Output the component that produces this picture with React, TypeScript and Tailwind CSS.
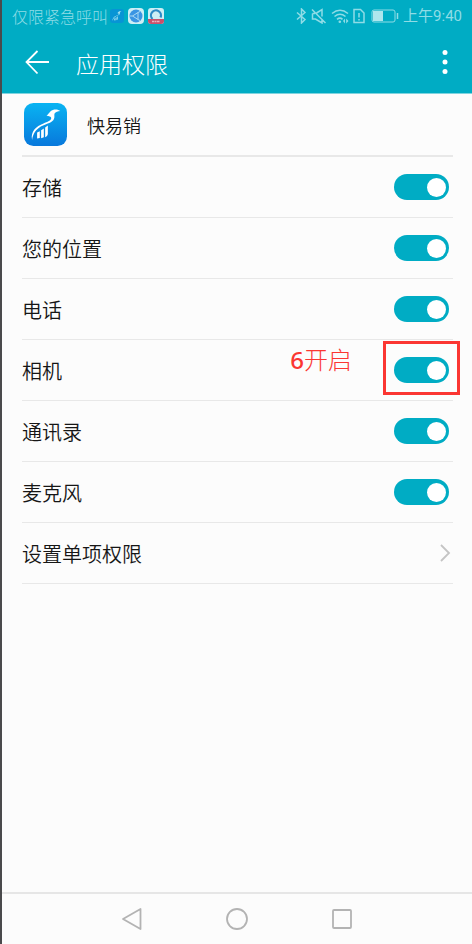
import { useState } from "react";

const permissions = [
    { id: "storage", label: "存储" },
    { id: "location", label: "您的位置" },
    { id: "phone", label: "电话" },
    { id: "camera", label: "相机", step: 6, note: "开启" },
    { id: "contacts", label: "通讯录" },
    { id: "microphone", label: "麦克风" },
];

const BirdMark = () => (
    <>
        <path d="M24 110C19 84 36 70 58 61C70 56 81 53 81 45C81 40 74 39 67 38C73 35 75 25 86 21C94 18 103 20 108 24C101 24 94 27 91 31C89 37 93 43 87 51C79 60 64 62 50 70C36 79 27 90 24 110Z" />
        <path d="M39 88L47 84V104L39 106ZM51 81L59 76V102L51 105ZM63 73L71 67V92C70 97 67 100 63 102Z" />
    </>
);

const AppIcon = ({ className }: { className: string }) => (
    <svg viewBox="0 0 128 128" className={className} aria-hidden="true">
        <defs>
            <linearGradient id="appBlue" x1="0" y1="0" x2="0" y2="1">
                <stop offset="0" stopColor="#09b4f2" />
                <stop offset="1" stopColor="#0878dc" />
            </linearGradient>
        </defs>
        <rect width="128" height="128" rx="28" fill="url(#appBlue)" />
        <g fill="#fff">
            <BirdMark />
        </g>
    </svg>
);

const StatusBar = () => (
    <div className="flex h-8 items-center justify-between px-2.5 text-[#8fdce6]">
        <div className="flex items-center gap-0.5">
            <span className="text-base leading-5 font-light">仅限紧急呼叫</span>
            {/* Notification icons */}
            <div className="flex items-center gap-1">
                <svg viewBox="0 0 14 14" className="size-3.5" aria-hidden="true">
                    <rect width="14" height="14" rx="3" fill="#0794d5" />
                    <g fill="#a5e2f2" transform="scale(.109)">
                        <BirdMark />
                    </g>
                </svg>
                <svg viewBox="0 0 16 16" className="size-4" aria-hidden="true">
                    <rect width="16" height="16" rx="4" fill="#cdeef5" />
                    <circle cx="8" cy="8" r="6.5" fill="#3b95e3" />
                    <path d="M4.5 8L10 4.5V11.5Z M4.5 8H2M10 4.5L12 3.5M10 11.5L12 12.5" fill="none" stroke="#b7e1f5" strokeWidth=".9" />
                </svg>
                <svg viewBox="0 0 16 16" className="size-4" aria-hidden="true">
                    <rect width="16" height="16" rx="3" fill="#cdeef5" />
                    <path d="M4.5 11A5 5 0 1 1 12.5 9.5" fill="none" stroke="#2d8bc6" strokeWidth="2.2" />
                    <path d="M0 11H16V13A3 3 0 0 1 13 16H3A3 3 0 0 1 0 13Z" fill="#c9506b" />
                    <path d="M4 13.5H12" stroke="#e7b3c0" strokeWidth="1.5" strokeDasharray="2 .5" />
                </svg>
            </div>
        </div>
        <div className="flex items-center gap-1">
            {/* Bluetooth */}
            <svg viewBox="0 0 11 16" className="h-4 w-[11px]" fill="none" stroke="currentColor" strokeWidth="1.5" aria-hidden="true">
                <path d="M1 4.5L9 11.5L5.5 15V1L9 4.5L1 11.5" />
            </svg>
            {/* Muted */}
            <svg viewBox="0 0 16 16" className="size-4" fill="none" stroke="currentColor" strokeWidth="1.5" aria-hidden="true">
                <path d="M1.5 5.5V11H4.5L11 15V11M5.5 5L11 1.5V8.5M1.5 5.5H4M1 1.5L14.5 15" />
            </svg>
            {/* Wi-Fi */}
            <svg viewBox="0 0 18 16" className="h-4 w-[18px]" fill="none" stroke="currentColor" strokeWidth="1.6" aria-hidden="true">
                <path d="M1 5.5Q9 -1 17 5.5M3.5 8.5Q9 4 14.5 8.5M6 11.3Q9 9 11.5 11.3" />
                <circle cx="8.8" cy="13.7" r="1.3" fill="currentColor" stroke="none" />
                <path d="M12 13L14 10.5V15.5ZM17.5 13L15.2 10.5V15.5Z" fill="currentColor" stroke="none" />
            </svg>
            {/* SIM warning */}
            <svg viewBox="0 0 12 16" className="h-4 w-3" fill="none" stroke="currentColor" strokeWidth="1.5" aria-hidden="true">
                <path d="M1 1.5H7.5L11 5V14.5H1ZM6 5V9.5M6 11V12.5" />
            </svg>
            {/* Battery */}
            <svg viewBox="0 0 28 14" className="ml-0.5 h-3.5 w-7" aria-hidden="true">
                <rect x="1" y="1" width="23" height="12" rx="2" fill="none" stroke="currentColor" />
                <rect x="2" y="2" width="10" height="10" fill="#aee6ed" />
                <path d="M26.5 4V10" stroke="currentColor" strokeWidth="1.5" />
            </svg>
            <span className="font-[Roboto,'Noto_Sans_CJK_SC',sans-serif] text-[15px]">上午9:40</span>
        </div>
    </div>
);

const Header = () => (
    <header className="border-b border-[#7fd4df] bg-[#00acc4]">
        <StatusBar />
        <div className="flex h-[61px] items-center pr-4 pl-5">
            <button type="button" aria-label="返回" className="text-white">
                <svg viewBox="0 0 32 32" className="size-8" fill="none" stroke="currentColor" strokeWidth="1.8" aria-hidden="true">
                    <path d="M27 15H4.5M15.5 4L4.5 15L15.5 26.5" />
                </svg>
            </button>
            <h1 className="ml-[22px] flex-1 text-[23px] leading-8 font-light text-white">应用权限</h1>
            <button type="button" aria-label="更多" className="text-white">
                <svg viewBox="0 0 20 32" className="h-8 w-5" fill="currentColor" aria-hidden="true">
                    <circle cx="9" cy="5.5" r="2.5" />
                    <circle cx="9" cy="15" r="2.5" />
                    <circle cx="9" cy="24.5" r="2.5" />
                </svg>
            </button>
        </div>
    </header>
);

const NavBar = () => (
    <nav className="flex h-[52px] items-center justify-center gap-[81px] border-t-2 border-[#e6e6e6] text-[#b3b3b3]">
        <button type="button" aria-label="后退">
            <svg viewBox="0 0 24 24" className="size-6" fill="none" stroke="currentColor" strokeWidth="1.8" strokeLinejoin="round" aria-hidden="true">
                <path d="M20.5 2V22L3 12Z" />
            </svg>
        </button>
        <button type="button" aria-label="主屏幕">
            <svg viewBox="0 0 24 24" className="size-6" fill="none" stroke="currentColor" strokeWidth="1.8" aria-hidden="true">
                <circle cx="12" cy="12" r="10" />
            </svg>
        </button>
        <button type="button" aria-label="最近任务">
            <svg viewBox="0 0 24 24" className="size-6" fill="none" stroke="currentColor" strokeWidth="1.8" aria-hidden="true">
                <rect x="3" y="3" width="18" height="18" rx="1" />
            </svg>
        </button>
    </nav>
);

const App = () => {
    const [granted, setGranted] = useState<string[]>(permissions.map((p) => p.id));

    const toggle = (id: string) =>
        setGranted((prev) => (prev.includes(id) ? prev.filter((p) => p !== id) : [...prev, id]));

    return (
        <div className="flex min-h-screen flex-col border-l-2 border-[#4a4a4c] bg-[#fcfcfc] font-['Noto_Sans_CJK_SC',sans-serif] text-[#161616]">
            <Header />
            <main className="flex-1 pr-[19px] pl-5 font-[350]">
                <div className="flex h-[63px] items-center border-b-2 border-[#e8e8e8]">
                    <AppIcon className="ml-0.5 size-[43px]" />
                    <h2 className="ml-5 text-lg">快易销</h2>
                </div>
                <ul>
                    {permissions.map((p) => (
                        <li key={p.id} className="relative flex h-[61px] items-center justify-between border-b border-[#e8e8e8] pr-1">
                            <label htmlFor={p.id} className="pt-0.5 text-xl">{p.label}</label>
                            <input
                                id={p.id}
                                type="checkbox"
                                role="switch"
                                checked={granted.includes(p.id)}
                                onChange={() => toggle(p.id)}
                                className="flex h-[26px] w-[55px] appearance-none items-center rounded-full bg-[#c4c4c4] px-[3px] before:size-[19px] before:rounded-full before:bg-white checked:justify-end checked:bg-[#00acc4]"
                            />
                            {p.note && (
                                <>
                                    <span className="absolute top-1 right-[101px] font-['Noto_Sans','Noto_Sans_CJK_SC',sans-serif] text-[24px] leading-8 font-light text-[#fb3632]">
                                        <span className="font-medium">{p.step}</span>
                                        {p.note}
                                    </span>
                                    <div className="pointer-events-none absolute top-px -right-[7px] h-[54px] w-[77px] border-3 border-[#fb3632]" />
                                </>
                            )}
                        </li>
                    ))}
                </ul>
                <a href="#single" className="flex h-[61px] items-center justify-between border-b border-[#e8e8e8] text-xl">
                    <span className="pt-0.5">设置单项权限</span>
                    <svg viewBox="0 0 16 20" className="h-5 w-4" fill="none" stroke="#c4c4c4" strokeWidth="1.8" aria-hidden="true">
                        <path d="M4 2L12 10L4 18" />
                    </svg>
                </a>
            </main>
            <NavBar />
        </div>
    );
};

export default App;
